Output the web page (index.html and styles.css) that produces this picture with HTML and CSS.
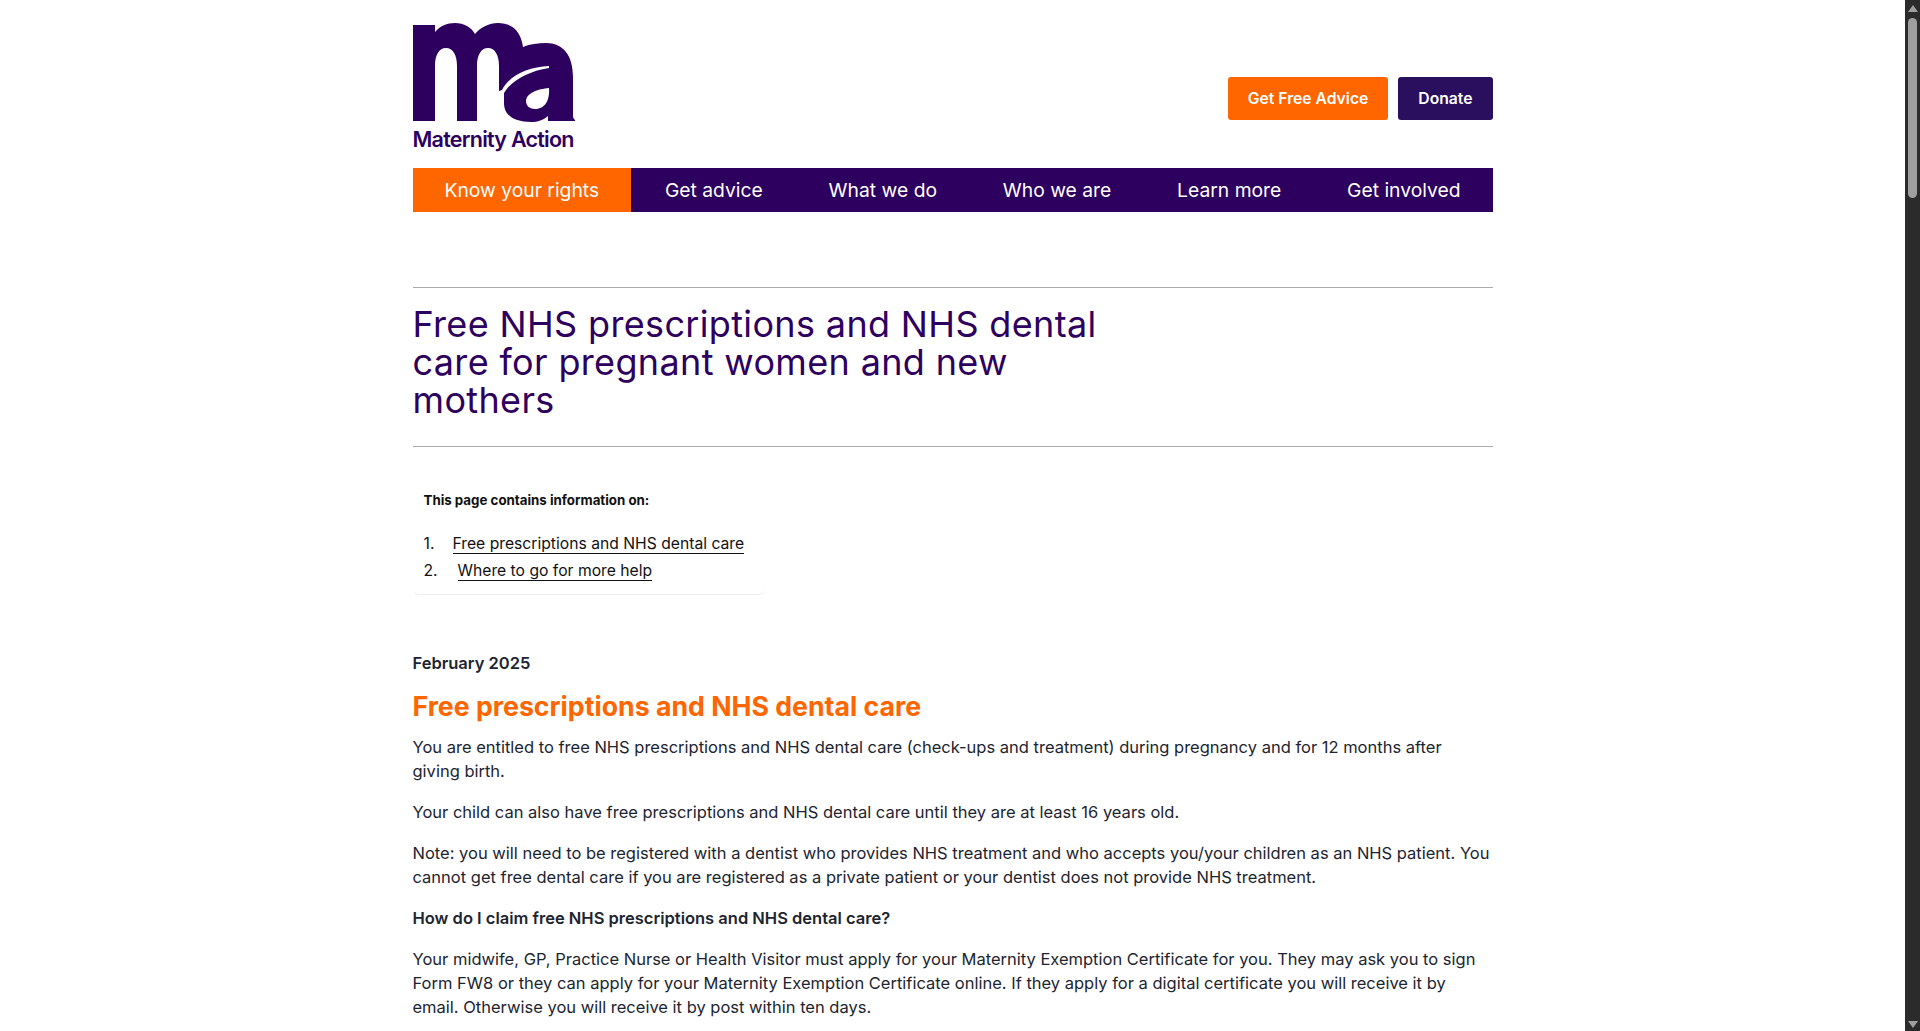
FILE: index.html
```html
<!DOCTYPE html>
<html lang="en">
<head>
<meta charset="utf-8">
<title>Free NHS prescriptions and NHS dental care</title>
<link rel="stylesheet" href="styles.css">
</head>
<body>
<div class="app">
<div class="viewport">
<div class="wrap">
<header class="top">
<a class="logo" href="#">
<svg class="logo-mark" viewBox="0 0 162 102" width="162" height="102" aria-hidden="true">
<path fill="#2d0060" d="M0 2H22V9C27 3 34 0 42 0C51 0 58 4 62 11C68 4 76 0 85 0C100 0 108 9 110 24C117 21 125 20 133 20C150 20 160 32 160 54V93C160 95 161 96 162 97V98H135V93C130 97 125 99 118 99C102 99 91 93 91 80C91 75 91 72 91 70C97 59 115 48 136 45L136 43C115 44 97 52 89 67L86 68V43C86 32 82 25 75 25C68 25 64 32 64 43V98H44V43C44 32 40 25 33 25C26 25 22 32 22 43V98H0Z"/>
<path fill="#fff" d="M136 65C125 66 113 70 113 78C113 83 117 86 122 86C130 86 137 80 136 65Z"/>
</svg>
<span class="logo-text">Maternity Action</span>
</a>
<div class="actions">
<a class="btn btn-orange" href="#">Get Free Advice</a>
<a class="btn btn-purple" href="#">Donate</a>
</div>
</header>
<nav class="nav">
<a class="nav-item is-active" href="#">Know your rights</a>
<a class="nav-item" href="#">Get advice</a>
<a class="nav-item" href="#">What we do</a>
<a class="nav-item" href="#">Who we are</a>
<a class="nav-item" href="#">Learn more</a>
<a class="nav-item" href="#">Get involved</a>
</nav>
<div class="title-band">
<h1>Free NHS prescriptions and NHS dental care for pregnant women and new mothers</h1>
</div>
<aside class="toc">
<p class="toc-title">This page contains information on:</p>
<ol class="toc-list">
<li><span class="toc-num">1.</span><a href="#">Free prescriptions and NHS dental care</a></li>
<li><span class="toc-num toc-num-wide">2.</span><a href="#">Where to go for more help</a></li>
</ol>
</aside>
<main class="content">
<p class="date">February 2025</p>
<h2>Free prescriptions and NHS dental care</h2>
<p>You are entitled to free NHS prescriptions and NHS dental care (check-ups and treatment) during pregnancy and for 12 months after giving birth.</p>
<p>Your child can also have free prescriptions and NHS dental care until they are at least 16 years old.</p>
<p>Note: you will need to be registered with a dentist who provides NHS treatment and who accepts you/your children as an NHS patient. You cannot get free dental care if you are registered as a private patient or your dentist does not provide NHS treatment.</p>
<p class="strong">How do I claim free NHS prescriptions and NHS dental care?</p>
<p>Your midwife, GP, Practice Nurse or Health Visitor must apply for your Maternity Exemption Certificate for you. They may ask you to sign Form FW8 or they can apply for your Maternity Exemption Certificate online. If they apply for a digital certificate you will receive it by email. Otherwise you will receive it by post within ten days.</p>
</main>
</div>
</div>
<div class="scrollbar" aria-hidden="true">
<span class="arrow arrow-up"></span>
<span class="thumb"></span>
<span class="arrow arrow-down"></span>
</div>
</div>
</body>
</html>
```
FILE: styles.css
```css
* { box-sizing: border-box; }
html, body { margin: 0; height: 100%; overflow: hidden; background: #fff; }
body { font-family: Inter, "Liberation Sans", sans-serif; color: #1c2530; }
a { color: inherit; text-decoration: none; }
.app { display: flex; height: 1031px; }
.viewport { flex: 1; height: 1031px; overflow: hidden; }
.wrap { width: 1080px; margin: 0 auto; }
.top { display: flex; justify-content: space-between; padding-top: 23px; height: 168px; }
.logo { display: flex; flex-direction: column; width: 162px; height: 130px; }
.logo-mark { display: block; }
.logo-text { font-size: 21.5px; line-height: 28px; font-weight: 600; color: #2d0060; letter-spacing: -0.75px; white-space: nowrap; }
.actions { display: flex; gap: 10px; margin-top: 54px; }
.btn { display: flex; align-items: center; height: 43px; padding: 0 20px; border-radius: 3px; font-size: 15.7px; font-weight: 600; color: #fff; }
.btn-orange { background: #ff6600; }
.btn-purple { background: #2b0f5f; }
.nav { display: flex; justify-content: space-between; height: 44px; background: #2d0060; }
.nav-item { display: flex; align-items: center; padding: 0 32px; font-size: 19.3px; color: #fff; white-space: nowrap; }
.is-active { background: #ff6600; }
.title-band { margin-top: 75px; border-top: 1px solid #aaa; border-bottom: 1px solid #aaa; padding: 17px 0 26px; height: 160px; }
h1 { margin: 0; width: 700px; font-size: 36px; line-height: 38px; font-weight: 400; letter-spacing: 0.35px; color: #2d0060; }
.toc { width: 352px; margin-top: 40px; padding: 1px 11px 13px; height: 108px; border-bottom: 1px solid #eee; border-radius: 6px; color: #111; }
.toc-title { margin: 0; font-size: 13.3px; font-weight: 700; line-height: 25px; }
.toc-list { list-style: none; margin: 20px 0 0; padding: 0; font-size: 15.7px; line-height: 22px; }
.toc-list li { display: flex; height: 27px; }
.toc-num { width: 29px; }
.toc-num-wide { width: 34px; }
.toc-list a { border-bottom: 1px solid #111; height: 21px; }
.content { margin-top: 56px; font-size: 16.5px; line-height: 24px; }
.content p { margin: 0 0 17px; }
.content .date { font-weight: 600; margin-bottom: 13px; }
h2 { margin: 0 0 11px; font-size: 26.7px; line-height: 36px; font-weight: 700; color: #ff6600; }
.content .strong { font-weight: 600; }
.scrollbar { width: 15px; height: 1031px; background: #2b2b2b; display: flex; flex-direction: column; align-items: center; }
.thumb { width: 9px; height: 180px; margin-top: 6px; border-radius: 5px; background: #9f9f9f; }
.arrow { width: 0; height: 0; border-left: 5px solid transparent; border-right: 5px solid transparent; }
.arrow-up { margin-top: 5px; border-bottom: 7px solid #9f9f9f; }
.arrow-down { margin-top: auto; margin-bottom: 3px; border-top: 7px solid #9f9f9f; }
```
